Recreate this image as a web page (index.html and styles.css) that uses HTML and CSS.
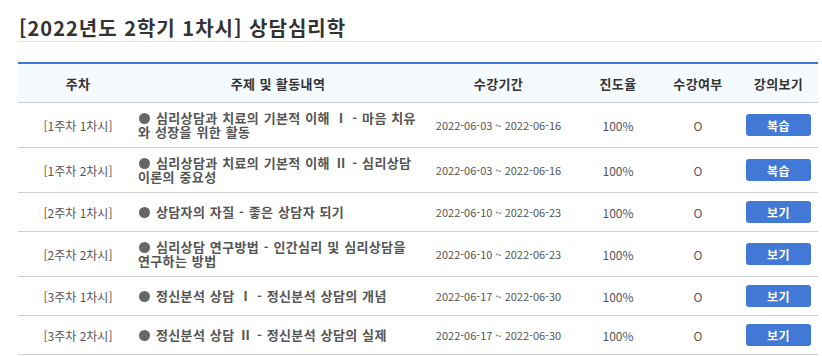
FILE: index.html
```html
<!DOCTYPE html>
<html lang="ko">
<head>
<meta charset="utf-8">
<link rel="stylesheet" href="styles.css">
</head>
<body>
<div class="page">
  <h1 class="title">[2022년도 2학기 1차시] 상담심리학</h1>
  <table class="lectures">
    <colgroup>
      <col class="c-week"><col class="c-topic"><col class="c-period"><col class="c-progress"><col class="c-done"><col class="c-view">
    </colgroup>
    <thead>
      <tr><th>주차</th><th class="topic-head">주제 및 활동내역</th><th class="period">수강기간</th><th>진도율</th><th>수강여부</th><th>강의보기</th></tr>
    </thead>
    <tbody>
      <tr>
        <td class="week">[1주차 1차시]</td>
        <td class="topic">심리상담과 치료의 기본적 이해 Ⅰ - 마음 치유와 성장을 위한 활동</td>
        <td class="period">2022-06-03 ~ 2022-06-16</td>
        <td class="num">100%</td>
        <td class="num">O</td>
        <td class="view"><span class="btn">복습</span></td>
      </tr>
      <tr>
        <td class="week">[1주차 2차시]</td>
        <td class="topic">심리상담과 치료의 기본적 이해 Ⅱ - 심리상담 이론의 중요성</td>
        <td class="period">2022-06-03 ~ 2022-06-16</td>
        <td class="num">100%</td>
        <td class="num">O</td>
        <td class="view"><span class="btn">복습</span></td>
      </tr>
      <tr>
        <td class="week">[2주차 1차시]</td>
        <td class="topic">상담자의 자질 - 좋은 상담자 되기</td>
        <td class="period">2022-06-10 ~ 2022-06-23</td>
        <td class="num">100%</td>
        <td class="num">O</td>
        <td class="view"><span class="btn">보기</span></td>
      </tr>
      <tr>
        <td class="week">[2주차 2차시]</td>
        <td class="topic">심리상담 연구방법 - 인간심리 및 심리상담을 연구하는 방법</td>
        <td class="period">2022-06-10 ~ 2022-06-23</td>
        <td class="num">100%</td>
        <td class="num">O</td>
        <td class="view"><span class="btn">보기</span></td>
      </tr>
      <tr>
        <td class="week">[3주차 1차시]</td>
        <td class="topic">정신분석 상담 Ⅰ - 정신분석 상담의 개념</td>
        <td class="period">2022-06-17 ~ 2022-06-30</td>
        <td class="num">100%</td>
        <td class="num">O</td>
        <td class="view"><span class="btn">보기</span></td>
      </tr>
      <tr>
        <td class="week">[3주차 2차시]</td>
        <td class="topic">정신분석 상담 Ⅱ - 정신분석 상담의 실제</td>
        <td class="period">2022-06-17 ~ 2022-06-30</td>
        <td class="num">100%</td>
        <td class="num">O</td>
        <td class="view"><span class="btn">보기</span></td>
      </tr>
    </tbody>
  </table>
</div>
</body>
</html>
```

FILE: styles.css
```css
html, body {
  margin: 0;
  padding: 0;
  background: #fff;
}
body {
  font-family: "Noto Sans CJK KR", "Noto Sans", sans-serif;
  color: #555;
}
.page {
  padding-left: 18px;
}
.title {
  margin: 0;
  padding: 16px 0 1px 1px;
  font-size: 20px;
  line-height: 24px;
  font-weight: 700;
  letter-spacing: 1px;
  color: #333;
  border-bottom: 1px solid #e2e2e2;
}
.lectures {
  margin-top: 20px;
  width: 800px;
  border-collapse: collapse;
  table-layout: fixed;
  border-top: 2px solid #3f78d6;
}
.c-week { width: 120px; }
.c-topic { width: 282px; }
.c-period { width: 159px; }
.c-progress { width: 78px; }
.c-done { width: 82px; }
.c-view { width: 79px; }
.lectures th {
  background: #f5faff;
  height: 38px;
  padding: 0;
  font-size: 13px;
  font-weight: 700;
  letter-spacing: 0.4px;
  color: #333;
  text-align: center;
  border-bottom: 1px solid #cfcfcf;
}
.lectures th.topic-head {
  padding-right: 2px;
}
.lectures td {
  padding: 8px 0;
  border-bottom: 1px solid #cfcfcf;
  font-size: 12px;
  line-height: 15px;
  text-align: center;
  vertical-align: middle;
  color: #555;
}
.lectures .period {
  padding-right: 2px;
}
.lectures td.period {
  font-size: 11px;
}
.lectures td.topic {
  text-align: left;
  font-size: 13px;
  font-weight: 700;
  line-height: 14px;
  letter-spacing: 0.35px;
  word-spacing: 0.6px;
  color: #555;
}
.lectures td.topic::before {
  content: "";
  display: inline-block;
  width: 11px;
  height: 11px;
  margin: 0 6px 0 1px;
  border-radius: 50%;
  background: #666;
  vertical-align: -1px;
}
.btn {
  display: inline-flex;
  align-items: center;
  justify-content: center;
  width: 65px;
  height: 22px;
  border-radius: 3px;
  background: #4279d6;
  color: #fff;
  font-size: 12px;
  font-weight: 700;
  letter-spacing: 0.5px;
  vertical-align: middle;
}
```
